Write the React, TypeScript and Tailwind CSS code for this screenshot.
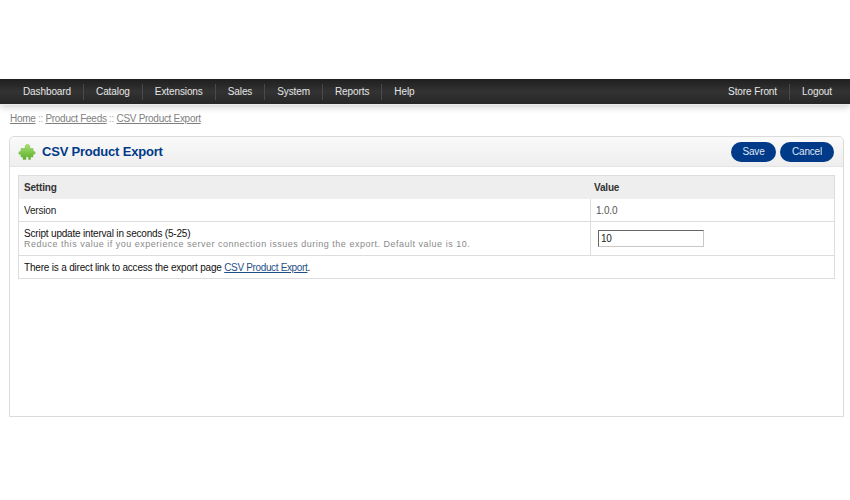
const navLeft = ["Dashboard", "Catalog", "Extensions", "Sales", "System", "Reports", "Help"];
const navRight = ["Store Front", "Logout"];

function PuzzleIcon() {
  return (
    <svg width="18" height="18" viewBox="0 0 18 18" className="shrink-0">
      <defs>
        <linearGradient id="puzzle" x1="0" y1="0" x2="0" y2="1">
          <stop offset="0" stopColor="#a8e070" />
          <stop offset="1" stopColor="#58b028" />
        </linearGradient>
      </defs>
      <path
        d="M7.500 5.500C6.500 3.500 7.500 1.500 9.500 1.500s3 2 2 4h3.500v2.800c1-.4 2.200.2 2.200 1.500s-1.200 1.900-2.200 1.500v2.700h-2.500v2.500H10.500v-1.800c-.2-1.400-2.300-1.400-2.500 0v1.800H5v-2.500H3V11.500c-1 .4-2.200-.2-2.200-1.500S2 8.100 3 8.500V5.500h4.500z"
        fill="url(#puzzle)"
        stroke="#74b544"
        strokeWidth="0.5"
      />
    </svg>
  );
}

function NavItem({ label, last }: { label: string; last: boolean }) {
  return (
    <a
      className={`flex h-[16px] items-center px-[12px] text-[10px] tracking-[-0.1px] text-[#e6e6e6] ${
        last ? "" : "border-r border-[#4a4a4a]"
      }`}
    >
      {label}
    </a>
  );
}

function Button({ label, width }: { label: string; width: string }) {
  return (
    <a
      className={`flex h-[20px] items-center justify-center rounded-[10px] bg-[#003a88] text-[10px] tracking-[-0.2px] text-[#dfe6f2] ${width}`}
    >
      {label}
    </a>
  );
}

export default function App() {
  return (
    <div className="h-[500px] w-[850px] overflow-hidden bg-white pt-[79px] font-['Liberation_Sans',Arial,sans-serif] text-[10px] tracking-[-0.19px] text-black">
      {/* Menu */}
      <div className="flex h-[25px] items-center justify-between bg-gradient-to-b from-[#1f1f1f] via-[#333333] to-[#262626] pl-[11px] pr-[6px] shadow-[0_1px_0_#e8e8e8,0_4px_6px_rgba(0,0,0,0.16)]">
        <div className="flex items-center">
          {navLeft.map((item, i) => (
            <NavItem key={item} label={item} last={i === navLeft.length - 1} />
          ))}
        </div>
        <div className="flex items-center">
          {navRight.map((item, i) => (
            <NavItem key={item} label={item} last={i === navRight.length - 1} />
          ))}
        </div>
      </div>

      {/* Breadcrumb */}
      <div className="flex h-[32px] items-center gap-[2.5px] pb-[4px] pl-[10px] text-[10px] tracking-[-0.3px] text-[#7f7f7f]">
        <a className="underline">Home</a>
        <span className="text-[#aaa]">::</span>
        <a className="underline">Product Feeds</a>
        <span className="text-[#aaa]">::</span>
        <a className="underline">CSV Product Export</a>
      </div>

      {/* Panel */}
      <div className="ml-[9px] h-[281px] w-[835px] rounded-t-[5px] border border-[#dbdbdb]">
        <div className="flex h-[30px] items-center justify-between rounded-t-[5px] border-b border-[#e4e4e4] bg-gradient-to-b from-[#fafafa] to-[#eeeeee] pl-[8px] pr-[9px]">
          <div className="flex items-center gap-[6px]">
            <PuzzleIcon />
            <h1 className="text-[13px] font-bold tracking-[-0.2px] text-[#003a88]">CSV Product Export</h1>
          </div>
          <div className="flex gap-[4px]">
            <Button label="Save" width="w-[45px]" />
            <Button label="Cancel" width="w-[54px]" />
          </div>
        </div>

        <div className="px-[8px] pt-[8px]">
          <div className="grid w-[817px] grid-cols-[572px_1fr] border border-[#dddddd] border-b-0">
            <div className="flex h-[23px] items-center border-b border-r border-[#eeeeee] bg-[#eeeeee] pl-[5px] font-bold text-[#333]">
              Setting
            </div>
            <div className="flex h-[23px] items-center border-b border-[#eeeeee] bg-[#eeeeee] pl-[3px] font-bold text-[#333]">
              Value
            </div>

            <div className="flex h-[23px] items-center border-b border-r border-[#dddddd] pl-[5px] text-[#222]">
              Version
            </div>
            <div className="flex h-[23px] items-center border-b border-[#dddddd] pl-[5px] text-[#555]">
              1.0.0
            </div>

            <div className="flex h-[34px] flex-col justify-center border-b border-r border-[#dddddd] pl-[5px] text-[#111]">
              <span className="leading-[11px]">Script update interval in seconds (5-25)</span>
              <span className="text-[9px] leading-[11px] tracking-[0.51px] text-[#8a8a8a]">
                Reduce this value if you experience server connection issues during the export. Default value is 10.
              </span>
            </div>
            <div className="flex h-[34px] items-center border-b border-[#dddddd] pl-[7px]">
              <input
                readOnly
                value="10"
                className="h-[17px] w-[106px] border border-[#c8c8c8] border-l-[#666] border-t-[#666] pl-[2px] text-[10px] text-[#222] outline-none"
              />
            </div>

            <div className="col-span-2 flex h-[23px] items-center border-b border-[#dddddd] pl-[5px] text-[#111]">
              <span>
                There is a direct link to access the export page{" "}
                <a className="tracking-[-0.35px] text-[#1f4f86] underline">CSV Product Export</a>.
              </span>
            </div>
          </div>
        </div>
      </div>
    </div>
  );
}
